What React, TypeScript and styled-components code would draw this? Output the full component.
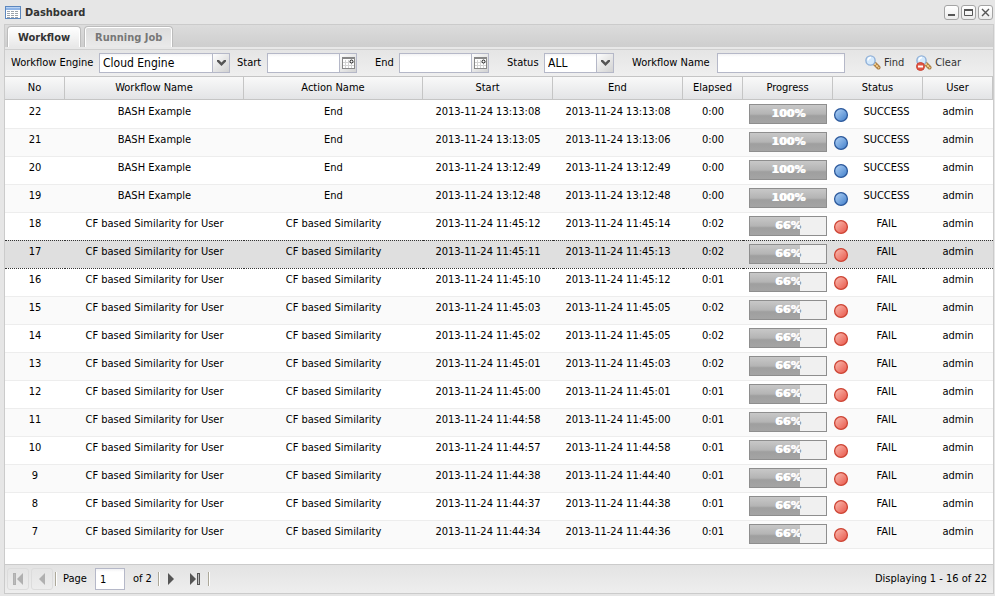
import React, { useState } from "react";
import styled, { createGlobalStyle, css } from "styled-components";

const GlobalStyle = createGlobalStyle`
  *, *::before, *::after { box-sizing: border-box; }
  body {
    margin: 0;
    background: #e6e6e6;
    color: #000;
    font: 11px/14px "DejaVu Sans Condensed", Tahoma, sans-serif;
  }
  button, input, select { font: inherit; color: inherit; margin: 0; }
`;

const Window = styled.main`
  display: flex;
  flex-direction: column;
  min-height: 100vh;
  padding: 0 1px 2px 4px;
  background: #e6e6e6;
`;

const TitleBar = styled.header`
  display: flex;
  align-items: center;
  gap: 4px;
  height: 24px;
  padding: 0 1px;
`;

const Title = styled.h1`
  flex: 1;
  margin: 0;
  padding-top: 2px;
  color: #333;
  font-size: 11px;
  line-height: 14px;
`;

const Tools = styled.div`
  display: flex;
  gap: 2px;
`;

const ToolButton = styled.button`
  display: grid;
  place-items: center;
  width: 15px;
  height: 15px;
  padding: 0;
  border: 1px solid #a4a4a4;
  border-radius: 3px;
  background: linear-gradient(#fff, #ececec);
`;

const Panel = styled.section`
  display: flex;
  flex: 1;
  flex-direction: column;
  border: 1px solid #cbcbcb;
`;

const TabBar = styled.div`
  display: flex;
  align-items: flex-end;
  gap: 3px;
  height: 22px;
  padding: 0 2px;
  background: linear-gradient(#dcdcdc, #cecece);
`;

const Tab = styled.button<{ $active: boolean }>`
  height: 21px;
  padding: 1px 10px 0;
  border: 1px solid #bcbcbc;
  border-bottom: 0;
  border-radius: 4px 4px 0 0;
  background: linear-gradient(#fff, #e8e8e8);
  box-shadow: inset 0 1px #fff, inset 1px 0 #fff, inset -1px 0 #fff;
  color: #333;
  font-weight: bold;
  ${(p) =>
    !p.$active &&
    css`
      background: linear-gradient(#dcdcdc, #eaeaea);
      color: #777;
    `}
`;

const TabStrip = styled.div`
  height: 3px;
  border-bottom: 1px solid #cfcfcf;
  background: #e8e8e8;
`;

const Toolbar = styled.form`
  display: flex;
  align-items: center;
  height: 26px;
  padding: 0 6px;
  background: linear-gradient(#e5e5e5, #efefef);
`;

const Field = styled.div<{ $label: number; $gap: number }>`
  display: flex;
  align-items: center;
  margin-right: ${(p) => p.$gap}px;
  white-space: nowrap;
  label {
    width: ${(p) => p.$label}px;
  }
`;

const inset = css`
  height: 20px;
  border: 1px solid #b5b8c8;
  border-radius: 0;
  background: linear-gradient(#f2f2f4, #fff 3px);
  outline: 0;
`;

const TextInput = styled.input<{ $width: number }>`
  ${inset}
  width: ${(p) => p.$width}px;
  padding: 0 4px;
  font-size: 12px;
`;

const SelectBox = styled.div<{ $width: number }>`
  display: grid;
  width: ${(p) => p.$width}px;
  > * {
    grid-area: 1 / 1;
  }
  select {
    ${inset}
    appearance: none;
    padding: 0 18px 1px 3px;
    font-size: 12px;
  }
`;

const trigger = css`
  display: grid;
  place-items: center;
  width: 17px;
  height: 20px;
  padding: 0;
  border: solid #b5b8c8;
  border-width: 1px 1px 1px 0;
  background: linear-gradient(135deg, #fdfdfd, #d2d2d2);
`;

const SelectTrigger = styled.span`
  ${trigger}
  justify-self: end;
  border-left-width: 1px;
  width: 18px;
  pointer-events: none;
`;

const DateTrigger = styled.button`
  ${trigger}
`;

const ActionButton = styled.button`
  display: flex;
  align-items: center;
  gap: 3px;
  height: 22px;
  padding: 0;
  border: 0;
  background: none;
  color: #333;
`;

const Actions = styled.div`
  display: flex;
  gap: 12px;
`;

const GridBody = styled.div`
  flex: 1;
  padding-bottom: 15px;
  background: #fff;
`;

const Table = styled.table`
  width: 100%;
  table-layout: fixed;
  border-collapse: separate;
  border-spacing: 0;
`;

const Column = styled.col<{ $width?: number }>`
  width: ${(p) => (p.$width ? `${p.$width}px` : "auto")};
`;

const HeadCell = styled.th`
  height: 24px;
  padding: 0;
  border: solid #c5c5c5;
  border-width: 1px 1px 1px 0;
  background: linear-gradient(#f9f9f9, #e3e4e6);
  font-weight: normal;
`;

const Row = styled.tr<{ $selected: boolean }>`
  background: #fff;
  &:nth-child(even) {
    background: #fafafa;
  }
  td {
    height: 28px;
    padding: 4px 0 0;
    border-top: 1px solid #ededed;
    text-align: center;
    vertical-align: top;
    white-space: nowrap;
    overflow: hidden;
  }
  &:first-child td {
    border-top-color: #fff;
  }
  &:last-child td {
    height: 29px;
    border-bottom: 1px solid #ededed;
  }
  ${(p) =>
    p.$selected &&
    css`
      &&& {
        background: #dfdfdf;
      }
      && td,
      && + tr td {
        border-top: 1px dotted #333;
      }
    `}
`;

const ProgressTrack = styled.div`
  display: grid;
  height: 20px;
  margin: -1px 6px 0;
  border: 1px solid #8e8e8e;
  background: #f0f0f0;
  font: bold 11px/18px "DejaVu Sans", sans-serif;
  > * {
    grid-area: 1 / 1;
  }
`;

const ProgressFill = styled.div`
  background: linear-gradient(#c8c8c8, #b4b4b4 50%, #9f9f9f 60%, #a4a4a4);
`;

const ProgressText = styled.span`
  color: #fff;
  text-align: center;
  text-shadow: 1px 0 #fff;
`;

const ProgressShade = styled(ProgressText)`
  color: #777;
  text-shadow: none;
`;

const StatusCell = styled.div`
  display: grid;
  grid-template-columns: 17px 1fr;
`;

const StatusDot = styled.svg`
  width: 16px;
  height: 16px;
  margin: 2px 0 0;
`;

const Pager = styled.footer`
  display: flex;
  align-items: center;
  height: 29px;
  padding: 0 6px 0 2px;
  border-top: 1px solid #cbcbcb;
  background: linear-gradient(#e3e3e3, #eee);
`;

const PageButton = styled.button`
  display: grid;
  place-items: center;
  width: 22px;
  height: 22px;
  margin-right: 2px;
  padding: 0;
  border: 1px solid transparent;
  border-radius: 3px;
  background: none;
  color: #555;
  &:disabled {
    border-color: #dcdcdc;
    color: #b0b0b0;
  }
`;

const Separator = styled.span`
  width: 2px;
  height: 14px;
  border-left: 1px solid #aca899;
  border-right: 1px solid #fff;
`;

const PageLabel = styled.label`
  display: flex;
  align-items: center;
  gap: 8px;
  margin: 0 8px 0 6px;
`;

const PageInput = styled.input`
  ${inset}
  width: 30px;
  height: 22px;
  padding: 0 4px;
`;

const PageCount = styled.span`
  margin-right: 6px;
`;

const Summary = styled.span`
  margin-left: auto;
`;

const GridIcon = () => (
  <svg width="16" height="16" viewBox="0 0 16 16" aria-hidden="true">
    <rect x="0.5" y="2.5" width="15" height="12" fill="#fff" stroke="#5c87be" />
    <rect x="1" y="3" width="14" height="3" fill="#8fb5e8" />
    <path d="M1 3.5h14" stroke="#bad3f3" />
    <path d="M2 7.5h12M2 9.5h12M2 11.5h12M2 13.5h12" stroke="#9ba3ab" strokeDasharray="3 1" />
  </svg>
);

const Arrow = () => (
  <svg width="9" height="6" viewBox="0 0 9 6" aria-hidden="true">
    <path d="M0 0h2l2.5 2.5L7 0h2v1.5L4.5 6 0 1.5z" fill="#555" />
  </svg>
);

const CalendarIcon = () => (
  <svg width="13" height="12" viewBox="0 0 13 12" aria-hidden="true">
    <rect x="0.5" y="0.5" width="12" height="11" fill="#fff" stroke="#888" />
    <path d="M0 1h13" stroke="#888" strokeWidth="2" />
    <path d="M3.5 3v8M6.5 3v8M9.5 3v8M1 5.5h11M1 8.5h11" stroke="#d4d4d4" />
    <circle cx="9.5" cy="4.5" r="1.5" fill="#fff" stroke="#111" />
  </svg>
);

const SearchIcon = ({ clear = false }: { clear?: boolean }) => (
  <svg width="16" height="16" viewBox="0 0 16 16" aria-hidden="true">
    <path d="M9.5 8.5l4 4" stroke="#a87b43" strokeWidth="4" strokeLinecap="round" />
    <path d="M9.5 8.5l4 4" stroke="#f0ca88" strokeWidth="2" strokeLinecap="round" />
    <path d="M10 11l2-2M12 13l2-2" stroke="#b98b4c" />
    <circle cx="5.5" cy="5.5" r="4.6" fill="#d4e9fc" stroke="#8fb0d8" strokeWidth="1.4" />
    <path d="M3 5.5a3 3 0 0 1 3-3" fill="none" stroke="#fff" strokeWidth="1.5" />
    {clear && (
      <>
        <circle cx="4.5" cy="11.5" r="4" fill="#e25543" stroke="#cb4435" />
        <path d="M2 11.5h5" stroke="#fff" strokeWidth="2" />
      </>
    )}
  </svg>
);

const Dot = ({ ok }: { ok: boolean }) => (
  <StatusDot viewBox="0 0 16 16" aria-hidden="true">
    <defs>
      <linearGradient id={ok ? "dot-ok" : "dot-fail"} x1="0" y1="0" x2="1" y2="1">
        <stop offset="0" stopColor={ok ? "#b5d5f7" : "#fac0b5"} />
        <stop offset="1" stopColor={ok ? "#3e7cc9" : "#e85346"} />
      </linearGradient>
    </defs>
    <circle cx="8" cy="8" r="6.4" fill={ok ? "url(#dot-ok)" : "url(#dot-fail)"} stroke={ok ? "#2b589b" : "#cd4434"} strokeWidth="1.3" />
  </StatusDot>
);

const PageIcon = ({ back = false, edge = false }: { back?: boolean; edge?: boolean }) => (
  <svg width="12" height="12" viewBox="0 0 12 12" aria-hidden="true">
    <g transform={back ? "matrix(-1 0 0 1 12 0)" : undefined}>
      <path d={edge ? "M1 0l6 6-6 6z" : "M3 0l6 6-6 6z"} fill="currentColor" />
      {edge && <rect x="8" y="0" width="3" height="12" fill="currentColor" />}
      {edge && <path d="M9.5 1v10" stroke="#bbb" />}
    </g>
  </svg>
);

interface Job {
  no: number;
  start: string;
  end: string;
  elapsed: string;
  ok: boolean;
}

const job = (no: number, start: string, end: string, elapsed: string, ok = false): Job => ({ no, start, end, elapsed, ok });

const jobs: Job[] = [
  job(22, "13:13:08", "13:13:08", "0:00", true),
  job(21, "13:13:05", "13:13:06", "0:00", true),
  job(20, "13:12:49", "13:12:49", "0:00", true),
  job(19, "13:12:48", "13:12:48", "0:00", true),
  job(18, "11:45:12", "11:45:14", "0:02"),
  job(17, "11:45:11", "11:45:13", "0:02"),
  job(16, "11:45:10", "11:45:12", "0:01"),
  job(15, "11:45:03", "11:45:05", "0:02"),
  job(14, "11:45:02", "11:45:05", "0:02"),
  job(13, "11:45:01", "11:45:03", "0:02"),
  job(12, "11:45:00", "11:45:01", "0:01"),
  job(11, "11:44:58", "11:45:00", "0:01"),
  job(10, "11:44:57", "11:44:58", "0:01"),
  job(9, "11:44:38", "11:44:40", "0:01"),
  job(8, "11:44:37", "11:44:38", "0:01"),
  job(7, "11:44:34", "11:44:36", "0:01"),
];

const columns: { name: string; width?: number }[] = [
  { name: "No", width: 60 },
  { name: "Workflow Name" },
  { name: "Action Name" },
  { name: "Start", width: 130 },
  { name: "End", width: 130 },
  { name: "Elapsed", width: 60 },
  { name: "Progress", width: 90 },
  { name: "Status", width: 90 },
  { name: "User", width: 70 },
];

const Progress = ({ value }: { value: number }) => (
  <ProgressTrack role="progressbar" aria-valuenow={value}>
    <ProgressFill style={{ width: `${value}%` }} />
    <ProgressShade aria-hidden="true">{value}%</ProgressShade>
    <ProgressText style={{ clipPath: `inset(0 ${100 - value}% 0 0)` }}>{value}%</ProgressText>
  </ProgressTrack>
);

const DateField = ({ id, label, width, gap }: { id: string; label: string; width: number; gap: number }) => (
  <Field $label={width} $gap={gap}>
    <label htmlFor={id}>{label}</label>
    <TextInput id={id} $width={73} />
    <DateTrigger type="button" aria-label={`${label} date`}>
      <CalendarIcon />
    </DateTrigger>
  </Field>
);

export default function App() {
  const [tab, setTab] = useState("Workflow");
  const [selected, setSelected] = useState(17);
  return (
    <>
      <GlobalStyle />
      <Window>
        <TitleBar>
          <GridIcon />
          <Title>Dashboard</Title>
          <Tools>
            <ToolButton aria-label="Minimize">
              <svg width="11" height="11" viewBox="0 0 11 11"><path d="M2 8h7" stroke="#555" strokeWidth="2" /></svg>
            </ToolButton>
            <ToolButton aria-label="Maximize">
              <svg width="11" height="11" viewBox="0 0 11 11"><path d="M1.5 3v5.5h8V3" fill="none" stroke="#555" /><path d="M1 3h9" stroke="#555" strokeWidth="2" /></svg>
            </ToolButton>
            <ToolButton aria-label="Close">
              <svg width="11" height="11" viewBox="0 0 11 11"><path d="M2 2l7 7M9 2l-7 7" stroke="#555" strokeWidth="1.4" /></svg>
            </ToolButton>
          </Tools>
        </TitleBar>
        <Panel>
          <TabBar role="tablist">
            {["Workflow", "Running Job"].map((name) => (
              <Tab key={name} role="tab" aria-selected={tab === name} $active={tab === name} onClick={() => setTab(name)}>
                {name}
              </Tab>
            ))}
          </TabBar>
          <TabStrip />
          <Toolbar onSubmit={(e) => e.preventDefault()}>
            <Field $label={88} $gap={7}>
              <label htmlFor="engine">Workflow Engine</label>
              <SelectBox $width={131}>
                <select id="engine"><option>Cloud Engine</option></select>
                <SelectTrigger><Arrow /></SelectTrigger>
              </SelectBox>
            </Field>
            <DateField id="start" label="Start" width={30} gap={18} />
            <DateField id="end" label="End" width={24} gap={18} />
            <Field $label={37} $gap={18}>
              <label htmlFor="status">Status</label>
              <SelectBox $width={70}>
                <select id="status"><option>ALL</option></select>
                <SelectTrigger><Arrow /></SelectTrigger>
              </SelectBox>
            </Field>
            <Field $label={85} $gap={20}>
              <label htmlFor="name">Workflow Name</label>
              <TextInput id="name" $width={128} />
            </Field>
            <Actions>
              <ActionButton><SearchIcon />Find</ActionButton>
              <ActionButton type="reset"><SearchIcon clear />Clear</ActionButton>
            </Actions>
          </Toolbar>
          <GridBody>
            <Table>
              <colgroup>
                {columns.map((c) => <Column key={c.name} $width={c.width} />)}
              </colgroup>
              <thead>
                <tr>{columns.map((c) => <HeadCell key={c.name} scope="col">{c.name}</HeadCell>)}</tr>
              </thead>
              <tbody>
                {jobs.map((j) => (
                  <Row key={j.no} $selected={selected === j.no} onClick={() => setSelected(j.no)}>
                    <td>{j.no}</td>
                    <td>{j.ok ? "BASH Example" : "CF based Similarity for User"}</td>
                    <td>{j.ok ? "End" : "CF based Similarity"}</td>
                    <td>2013-11-24 {j.start}</td>
                    <td>2013-11-24 {j.end}</td>
                    <td>{j.elapsed}</td>
                    <td><Progress value={j.ok ? 100 : 66} /></td>
                    <td>
                      <StatusCell>
                        <Dot ok={j.ok} />
                        <span>{j.ok ? "SUCCESS" : "FAIL"}</span>
                      </StatusCell>
                    </td>
                    <td>admin</td>
                  </Row>
                ))}
              </tbody>
            </Table>
          </GridBody>
          <Pager>
            <PageButton disabled aria-label="First page"><PageIcon back edge /></PageButton>
            <PageButton disabled aria-label="Previous page"><PageIcon back /></PageButton>
            <Separator />
            <PageLabel>Page<PageInput defaultValue="1" /></PageLabel>
            <PageCount>of 2</PageCount>
            <Separator />
            <PageButton aria-label="Next page"><PageIcon /></PageButton>
            <PageButton aria-label="Last page"><PageIcon edge /></PageButton>
            <Separator />
            <Summary>Displaying 1 - 16 of 22</Summary>
          </Pager>
        </Panel>
      </Window>
    </>
  );
}
